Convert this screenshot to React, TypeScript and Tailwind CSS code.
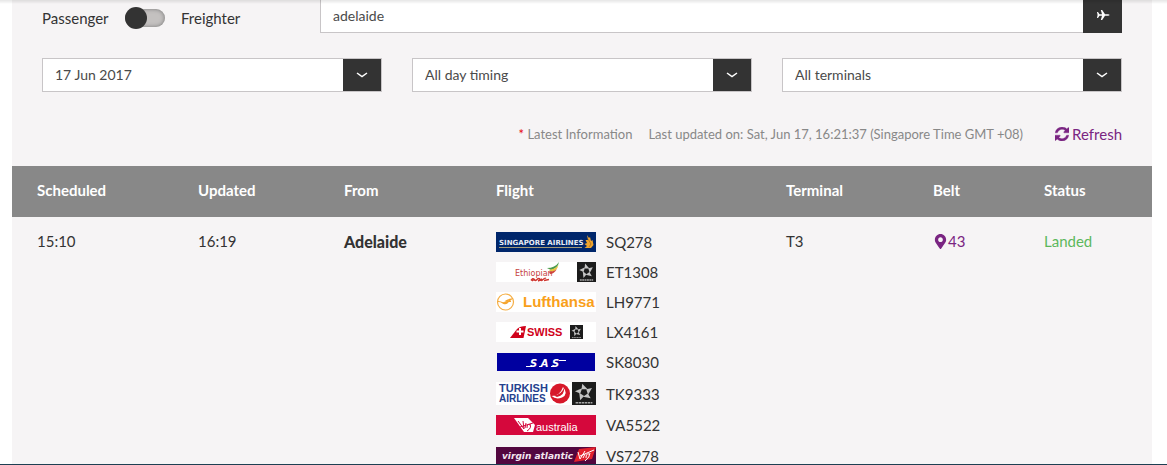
import { ReactNode, useState } from 'react';
import { FaMapMarkerAlt } from 'react-icons/fa';

interface SelectFieldProps {
  label: string;
  options: string[];
}

interface Flight {
  code: string;
  airline: string;
  logo: ReactNode;
}

const SelectField = ({ label, options }: SelectFieldProps) => (
  <div className="flex h-[34px] flex-1 border border-[#c8c5c7] bg-white">
    <select
      aria-label={label}
      className="min-w-0 flex-1 appearance-none bg-white pl-3 text-sm text-[#4a4a4a] outline-none"
    >
      {options.map((option) => (
        <option key={option}>{option}</option>
      ))}
    </select>
    <span className="flex w-[38px] items-center justify-center bg-[#333]">
      <svg width="12" height="8" viewBox="0 0 12 8" fill="none">
        <path d="M1 2 L6 5.600 L11 2" stroke="#fff" strokeWidth="1.500" />
      </svg>
    </span>
  </div>
);

const PlaneIcon = () => (
  <svg width="14" height="12" viewBox="0 0 14 12" fill="currentColor">
    <path d="M1 3 H2 L3.500 5.200 H6 L4.800 1 H6.200 L9 5.200 H12 Q13.500 5.400 13.500 6 Q13.500 6.600 12 6.800 H9 L6.200 11 H4.800 L6 6.800 H3.500 L2 9 H1 L1.600 6 Z" />
  </svg>
);

const RefreshIcon = () => (
  <svg width="14" height="14" viewBox="0 0 1536 1536" fill="currentColor">
    <path
      d="M1511 928q0 5-1 7-64 268-268 434.500t-478 166.500q-146 0-282.500-55t-243.500-157l-129 129q-19 19-45 19t-45-19-19-45v-448q0-26 19-45t45-19h448q26 0 45 19t19 45-19 45l-137 137q71 66 161 102t187 36q134 0 250-65t186-179q11-17 53-117 8-23 30-23h192q13 0 22.500 9.500t9.500 22.500zm25-800v448q0 26-19 45t-45 19h-448q-26 0-45-19t-19-45 19-45l138-138q-148-137-349-137-134 0-250 65t-186 179q-11 17-53 117-8 23-30 23h-199q-13 0-22.500-9.500t-9.500-22.500v-7q65-268 270-434.500t480-166.500q146 0 284 55.500t245 156.500l130-129q19-19 45-19t45 19 19 45z"
      stroke="currentColor"
      strokeWidth="40"
    />
  </svg>
);

interface StarAllianceProps {
  x: number;
  y: number;
  width: number;
  height: number;
}

// Five slanted wedges around an open centre
const StarAlliance = ({ x, y, width, height }: StarAllianceProps) => (
  <svg
    x={x}
    y={y}
    width={width}
    height={height}
    viewBox="0 0 20 20"
    preserveAspectRatio="none"
  >
    <rect width="20" height="20" fill="#1c1c1c" />
    {[0, 72, 144, 216, 288].map((angle) => (
      <path
        key={angle}
        d="M8.500 1.500 L13 6.400 L8 6.400 Z"
        fill="#c4c4c4"
        transform={`rotate(${angle} 10 9)`}
      />
    ))}
    <path d="M3 18 H17" stroke="#a5a5a5" strokeWidth="1.400" strokeDasharray="2 0.500" />
  </svg>
);

const SingaporeLogo = () => (
  <svg width="100" height="20" viewBox="0 0 100 20">
    <rect width="100" height="20" fill="#00266b" />
    <text x="3" y="13" fill="#e6ebf5" fontFamily="DejaVu Sans" fontSize="7" fontWeight="700">
      SINGAPORE AIRLINES
    </text>
    <path d="M3 15.500 H86" stroke="#a39a78" />
    <path
      d="M91 3 L93 6 L94 5 L95 9 L96.500 8 L97.500 13 L95 16 H88.500 L91 14 L88.500 12 L91 11 L89.500 8 L92 8 Z"
      fill="#efa52e"
    />
    <path d="M92 7 L95 12 L93 15" stroke="#a7691b" strokeWidth="0.700" fill="none" />
  </svg>
);

const EthiopianLogo = () => (
  <svg width="100" height="20" viewBox="0 0 100 20">
    <rect width="100" height="20" fill="#fff" />
    <path d="M51 6 Q59 6 63 0 Q62 6 55 8 Z" fill="#4b9b4b" />
    <path d="M53 8 Q60 7 62.500 3 Q61 9 55 10 Z" fill="#e8c33c" />
    <path d="M53 10 Q59 9 61 7 Q58 12 54 12 Z" fill="#d2453c" />
    <text x="19" y="14" fill="#c5423e" fontFamily="DejaVu Sans" fontSize="8">
      Ethiopian
    </text>
    <path
      d="M35 18.500 q2 -3 3 -1 t3 0 t3 0 t3 0 t3 -1 M36 19 l3 -2 M42 19 l4 -2 M48 18.500 l5 -1"
      stroke="#cf3630"
      strokeWidth="1.400"
      fill="none"
    />
    <StarAlliance x={81} y={0} width={19} height={20} />
  </svg>
);

const LufthansaLogo = () => (
  <svg width="100" height="20" viewBox="0 0 100 20">
    <rect width="100" height="20" fill="#fff" />
    <circle cx="9.500" cy="10" r="8" fill="none" stroke="#f5ae45" strokeWidth="1.200" />
    <path
      d="M2 9.500 Q5 9.500 7 11 Q9 12.500 12 10 L15.500 7 Q12 7.500 10 9 Q12 9 15 9.500"
      fill="none"
      stroke="#f5a52e"
      strokeWidth="1.200"
    />
    <path d="M6 10.500 Q9 10 11 9 L12 11 Q9 13.500 6 10.500 Z" fill="#f5a52e" />
    <text x="27" y="15" fill="#f9a01b" fontFamily="Liberation Sans" fontSize="15" fontWeight="700">
      Lufthansa
    </text>
  </svg>
);

const SwissLogo = () => (
  <svg width="100" height="20" viewBox="0 0 100 20">
    <rect width="100" height="20" fill="#fff" />
    <path d="M14 16 L21 7 Q24 4 30 4 L27.500 16 Z" fill="#d0021b" />
    <path d="M24 6 V13 M20.500 9.500 H27.500" stroke="#fff" strokeWidth="2" />
    <text x="31" y="14" fill="#d0021b" fontFamily="Liberation Sans" fontSize="11" fontWeight="700">
      SWISS
    </text>
    <StarAlliance x={74} y={3} width={13} height={14} />
  </svg>
);

const SasLogo = () => (
  <svg width="100" height="20" viewBox="0 0 100 20">
    <rect x="1" y="1" width="98" height="18" fill="#0000a0" />
    <text
      x="34"
      y="15"
      fill="#fff"
      fontFamily="DejaVu Sans"
      fontSize="10"
      fontWeight="700"
      fontStyle="italic"
    >
      S A S
    </text>
    <path d="M30 14.500 H36 M43 14.500 H46 M55 14.500 H59 M63 8.500 H70" stroke="#fff" />
  </svg>
);

const TurkishLogo = () => (
  <svg width="100" height="23" viewBox="0 0 100 23">
    <rect width="100" height="23" fill="#fff" />
    <g fill="#24418e" fontFamily="Liberation Sans" fontWeight="700">
      <text x="3" y="10" fontSize="11">TURKISH</text>
      <text x="3" y="20" fontSize="10">AIRLINES</text>
    </g>
    <circle cx="64" cy="11.500" r="10" fill="#d7182a" />
    <path
      d="M55.500 14 Q64 14 67 5 Q73 12 66 15.500 Q60 18 55.500 14 Z"
      fill="#fff"
    />
    <path d="M58 13.500 Q65 13 68 6 Q69 13 61 15 Z" fill="#d7182a" />
    <StarAlliance x={76} y={0} width={24} height={23} />
  </svg>
);

const VirginAustraliaLogo = () => (
  <svg width="100" height="20" viewBox="0 0 100 20">
    <rect width="100" height="20" fill="#d5083c" />
    <path d="M18 3 L32 3 L39 10 L37 17 L28 17 Z" fill="#fff" />
    <path
      d="M22 6 L28 14 L27 6 M29 13 L30 8 M31 13 Q31 8 34 10 M34 9 Q36 13 31 16 M24 12 L37 8"
      fill="none"
      stroke="#d5083c"
    />
    <text x="40" y="16" fill="#fff" fontFamily="Liberation Sans" fontSize="11">
      australia
    </text>
  </svg>
);

const VirginAtlanticLogo = () => (
  <svg width="100" height="22" viewBox="0 0 100 22">
    <rect y="2" width="100" height="20" fill="#52063f" />
    <text
      x="6"
      y="14"
      fill="#f3e6ef"
      fontFamily="DejaVu Sans"
      fontSize="9"
      fontWeight="700"
      fontStyle="italic"
    >
      virgin atlantic
    </text>
    <path d="M83 4 L100 2 L96 14 L78 17 Z" fill="#e2202c" />
    <path
      d="M82 7 L84 14 L89 6 M87 13 L89 9 M90 13 Q90 8 93 9 M94 8 Q94 12 89 16 M84 11 L98 5"
      fill="none"
      stroke="#fff"
    />
  </svg>
);

const flights: Flight[] = [
  { code: 'SQ278', airline: 'Singapore Airlines', logo: <SingaporeLogo /> },
  { code: 'ET1308', airline: 'Ethiopian', logo: <EthiopianLogo /> },
  { code: 'LH9771', airline: 'Lufthansa', logo: <LufthansaLogo /> },
  { code: 'LX4161', airline: 'Swiss', logo: <SwissLogo /> },
  { code: 'SK8030', airline: 'SAS', logo: <SasLogo /> },
  { code: 'TK9333', airline: 'Turkish Airlines', logo: <TurkishLogo /> },
  { code: 'VA5522', airline: 'Virgin Australia', logo: <VirginAustraliaLogo /> },
  { code: 'VS7278', airline: 'Virgin Atlantic', logo: <VirginAtlanticLogo /> }
];

const App = () => {
  const [freighter, setFreighter] = useState(false);
  const [query, setQuery] = useState('adelaide');

  return (
    <div className="flex h-screen flex-col bg-white font-['Lato',sans-serif] text-[15px]/5 text-[#333]">
      {/* Shadow of the sticky header */}
      <div className="pointer-events-none fixed inset-x-0 top-0 h-1 bg-linear-to-b from-black/10 to-transparent" />

      <main className="mr-[15px] ml-3 min-h-0 flex-1 overflow-hidden bg-[#f6f4f5]">
        <section className="px-[30px]">
          <div className="flex">
            <div className="flex w-[278px] items-center pt-[2px]">
              <label htmlFor="flight-type" className="w-[83px]">
                Passenger
              </label>
              <input
                id="flight-type"
                type="checkbox"
                role="switch"
                checked={freighter}
                onChange={(e) => setFreighter(e.target.checked)}
                className="flex h-[18px] w-10 appearance-none items-center rounded-full bg-[#c4c1c0] inset-shadow-[0_0_4px_#777] before:size-[22px] before:shrink-0 before:rounded-full before:bg-[#333] checked:justify-end"
              />
              <label htmlFor="flight-type" className="pl-4">
                Freighter
              </label>
            </div>
            <div className="flex h-[33px] flex-1">
              <input
                type="text"
                aria-label="Flight or city"
                value={query}
                onChange={(e) => setQuery(e.target.value)}
                className="min-w-0 flex-1 border-b border-l border-[#c8c5c7] bg-white pl-3 text-sm text-[#4a4a4a] outline-none"
              />
              <button
                aria-label="Search flights"
                className="flex w-[39px] items-center justify-center bg-[#333] pb-1 text-white"
              >
                <PlaneIcon />
              </button>
            </div>
          </div>

          <div className="mt-[25px] flex gap-[30px]">
            <SelectField label="Date" options={['17 Jun 2017', '18 Jun 2017']} />
            <SelectField label="Time" options={['All day timing']} />
            <SelectField
              label="Terminal"
              options={['All terminals', 'T1', 'T2', 'T3']}
            />
          </div>

          <div className="flex items-center justify-end pt-8 pb-[22px] text-[13px]/5 text-[#888]">
            <p>
              <span className="text-red-600">*</span> Latest Information
            </p>
            <p className="ml-4">
              Last updated on: Sat, Jun 17, 16:21:37 (Singapore Time GMT +08)
            </p>
            <button className="ml-8 flex items-center gap-[3px] text-[15px]/5 text-[#7a2582]">
              <RefreshIcon />
              Refresh
            </button>
          </div>
        </section>

        <table className="w-full table-fixed text-left">
          <thead className="bg-[#888] text-white">
            <tr className="h-[51px]">
              <th className="w-[161px] pb-1 pl-[25px] font-bold">Scheduled</th>
              <th className="w-[146px] pb-1 pl-[25px] font-bold">Updated</th>
              <th className="w-[152px] pb-1 pl-[25px] font-bold">From</th>
              <th className="w-[290px] pb-1 pl-[25px] font-bold">Flight</th>
              <th className="w-[147px] pb-1 pl-[25px] font-bold">Terminal</th>
              <th className="w-[111px] pb-1 pl-[25px] font-bold">Belt</th>
              <th className="w-[133px] pb-1 pl-[25px] font-bold">Status</th>
            </tr>
          </thead>
          <tbody>
            <tr className="align-top">
              <td className="pt-[14px] pl-[25px]">15:10</td>
              <td className="pt-[14px] pl-[25px]">16:19</td>
              <td className="pt-[15px] pl-[25px] text-base/5 font-black">Adelaide</td>
              <td className="pt-[15px] pl-[25px]">
                <ul className="flex flex-col gap-2.5">
                  {flights.map((flight) => (
                    <li key={flight.code} className="flex items-center gap-2.5">
                      <span role="img" aria-label={flight.airline}>
                        {flight.logo}
                      </span>
                      {flight.code}
                    </li>
                  ))}
                </ul>
              </td>
              <td className="pt-[14px] pl-[25px]">T3</td>
              <td className="pt-[14px] pl-[25px]">
                <a href="#belt-43" className="flex items-center text-[#7a2582]">
                  <FaMapMarkerAlt size={15} />
                  43
                </a>
              </td>
              <td className="pt-[14px] pl-[25px] text-[#5cb85c]">Landed</td>
            </tr>
          </tbody>
        </table>
      </main>

      <footer className="h-px bg-[#1d3f52]" />
    </div>
  );
};

export default App;
